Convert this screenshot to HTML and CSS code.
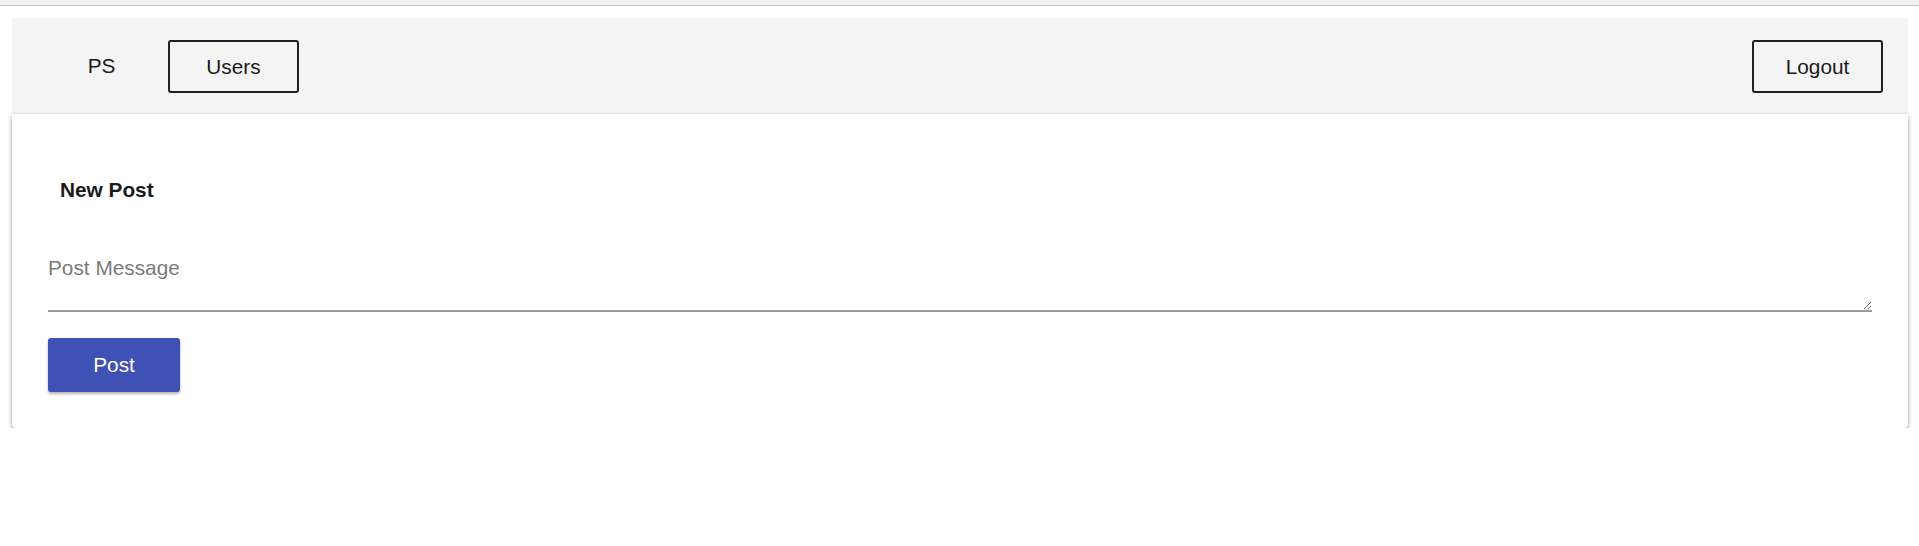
FILE: index.html
```html
<!DOCTYPE html>
<html>
<head>
<meta charset="utf-8">
<link rel="stylesheet" href="styles.css">
</head>
<body>
<div class="topstrip"></div>
<div class="page">
  <nav class="navbar">
    <div class="nav-left">
      <a class="brand">PS</a>
      <button class="nav-btn">Users</button>
    </div>
    <button class="nav-btn">Logout</button>
  </nav>
  <section class="card">
    <h2 class="card-title">New Post</h2>
    <textarea class="message" rows="2" placeholder="Post Message"></textarea>
    <div class="actions">
      <button class="post-btn">Post</button>
    </div>
  </section>
</div>
</body>
</html>
```
FILE: styles.css
```css
html, body {
  margin: 0;
  padding: 0;
  background: #ffffff;
  font-family: "Liberation Sans", Arial, sans-serif;
  color: #1a1a1a;
}

.topstrip {
  height: 5px;
  background: #f0f0f0;
  border-bottom: 1px solid #c2c2c2;
}

.page {
  padding: 12px 11px 0 12px;
}

.navbar {
  display: flex;
  align-items: center;
  justify-content: space-between;
  height: 96px;
  padding: 0 25px 0 24px;
  background: #f4f4f4;
  box-sizing: border-box;
}

.nav-left {
  display: flex;
  align-items: center;
  gap: 1px;
}

.brand {
  width: 131px;
  text-align: center;
  font-size: 20.8px;
  line-height: 24px;
  color: #1a1a1a;
}

.nav-btn {
  width: 131px;
  height: 53px;
  box-sizing: border-box;
  border: 2px solid #222222;
  border-radius: 3px;
  background: transparent;
  font-family: "Liberation Sans", Arial, sans-serif;
  font-size: 20.8px;
  line-height: 24px;
  color: #1a1a1a;
  padding: 0;
  margin-top: 1px;
}

.card {
  background: #ffffff;
  border-radius: 0 0 4px 4px;
  box-shadow: 0 2px 4px rgba(0, 0, 0, 0.38), 0 0 2px rgba(0, 0, 0, 0.1);
  padding: 36px 36px 36px 36px;
  display: flex;
  flex-direction: column;
}

.card-title {
  margin: 28px 0 0 0;
  padding: 0 12px;
  font-size: 20.8px;
  line-height: 24px;
  font-weight: bold;
  color: #1a1a1a;
}

.message {
  display: block;
  margin-top: 49px;
  width: 100%;
  height: 61px;
  box-sizing: border-box;
  border: none;
  border-bottom: 2px solid #999999;
  padding: 5px 0 6px 0;
  font-family: "Liberation Sans", Arial, sans-serif;
  font-size: 20.8px;
  line-height: 24px;
  color: #222;
  outline: none;
  background: transparent;
}

.message::placeholder {
  color: #7a7a7a;
}

.actions {
  margin-top: 26px;
  display: flex;
}

.post-btn {
  width: 132px;
  height: 54px;
  border: none;
  border-radius: 3px;
  background: #3f51b5;
  color: #ffffff;
  font-family: "Liberation Sans", Arial, sans-serif;
  font-size: 20.8px;
  line-height: 24px;
  padding: 0;
  box-shadow: 0 2px 3px rgba(0, 0, 0, 0.3);
}
```
